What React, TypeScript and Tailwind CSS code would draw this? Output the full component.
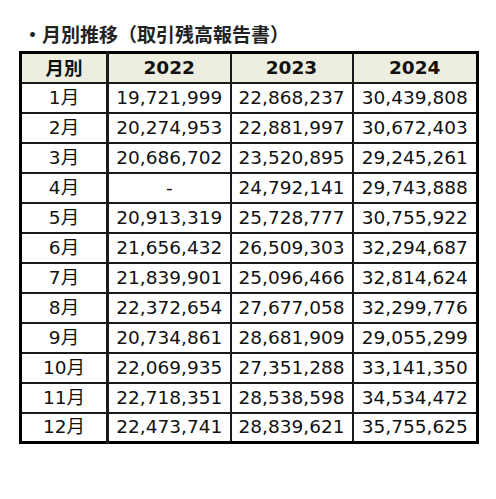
import React from "react";

const rows: [string, string, string, string][] = [
  ["1月", "19,721,999", "22,868,237", "30,439,808"],
  ["2月", "20,274,953", "22,881,997", "30,672,403"],
  ["3月", "20,686,702", "23,520,895", "29,245,261"],
  ["4月", "-", "24,792,141", "29,743,888"],
  ["5月", "20,913,319", "25,728,777", "30,755,922"],
  ["6月", "21,656,432", "26,509,303", "32,294,687"],
  ["7月", "21,839,901", "25,096,466", "32,814,624"],
  ["8月", "22,372,654", "27,677,058", "32,299,776"],
  ["9月", "20,734,861", "28,681,909", "29,055,299"],
  ["10月", "22,069,935", "27,351,288", "33,141,350"],
  ["11月", "22,718,351", "28,538,598", "34,534,472"],
  ["12月", "22,473,741", "28,839,621", "35,755,625"],
];

export default function App() {
  const font = { fontFamily: '"DejaVu Sans", "Noto Sans CJK JP", sans-serif' };
  return (
    <div className="w-[496px] h-[499px] bg-white text-[#111]" style={font}>
      <div className="pt-[20px] pl-[23px] h-[47px] text-[19px] leading-[27px] font-bold text-[#222]" style={{ fontFamily: '"Noto Sans CJK JP", sans-serif' }}>
        ・月別推移（取引残高報告書）
      </div>
      <div className="pt-[4px] pl-[19px]">
        <table className="border-collapse border-[3px] border-black table-fixed w-[457px] text-[18.5px]">
          <colgroup>
            <col className="w-[87px]" />
            <col className="w-[123px]" />
            <col className="w-[122px]" />
            <col className="w-[125px]" />
          </colgroup>
          <thead>
            <tr className="bg-[#edeee0] h-[30px]">
              <th className="border-2 border-r-[3px] border-b-2 border-[#1a1a1a] p-0 font-bold" style={{ fontFamily: '"Noto Sans CJK JP", sans-serif' }}>月別</th>
              <th className="border-2 border-[#1a1a1a] p-0 font-bold">2022</th>
              <th className="border-2 border-[#1a1a1a] p-0 font-bold">2023</th>
              <th className="border-2 border-[#1a1a1a] p-0 font-bold">2024</th>
            </tr>
          </thead>
          <tbody>
            {rows.map((r) => (
              <tr key={r[0]} className="h-[30px]">
                <td className="border-2 border-r-[3px] border-[#1a1a1a] p-0 text-center leading-none">{r[0]}</td>
                <td className="border-2 border-[#1a1a1a] p-0 text-center leading-none">{r[1]}</td>
                <td className="border-2 border-[#1a1a1a] p-0 text-center leading-none">{r[2]}</td>
                <td className="border-2 border-[#1a1a1a] p-0 text-center leading-none">{r[3]}</td>
              </tr>
            ))}
          </tbody>
        </table>
      </div>
    </div>
  );
}
